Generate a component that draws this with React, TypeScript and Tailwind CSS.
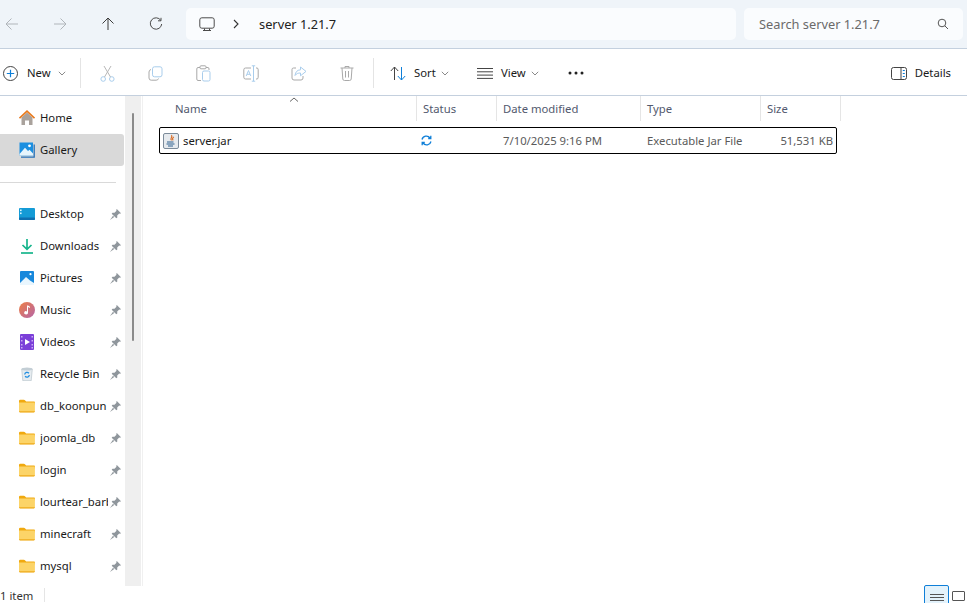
import React from "react";

const Chevron = ({ c = "#8a8a8a" }: { c?: string }) => (
  <svg width="8" height="5" viewBox="0 0 8 5" fill="none" stroke={c} strokeWidth="1"><path d="M.8.8 4 4 7.2.8" /></svg>
);

const Pin = () => (
  <svg width="11" height="11" viewBox="0 0 11 11" fill="#8f969c"><path d="M6.800 0 11 4.200 10 4.800 9.200 4.500 7.200 6.500 7.300 8.500 6.300 9.300 1.700 4.700 2.500 3.700 4.500 3.800 6.500 1.800 6.200 1Z" /><path d="M3 6.800 0 11 4.200 8Z" /></svg>
);

const Folder = () => (
  <svg width="16" height="14" viewBox="0 0 16 14"><path d="M0 2q0-1.200 1.200-1.200h3.600q.8 0 1.400.7l.9.9h8q.9 0 .9 1v2H0Z" fill="#f0a90f" /><path d="M0 3.600h15.900v8.700q0 1-1 1H1q-1 0-1-1Z" fill="#fcd468" /><path d="M0 12.200h15.900v.4q0 .8-1 .8H1q-1 0-1-.8Z" fill="#eeaa1c" /></svg>
);

const Ic = {
  home: <svg width="16" height="16" viewBox="0 0 16 16"><path d="M2.500 7.500 8 2.500l5.500 5V15H10v-4.500H6V15H2.500Z" fill="#a9a29c" /><path d="M.5 8.200 8 1.200l7.500 7" fill="none" stroke="#e8791c" strokeWidth="1.600" /></svg>,
  gallery: <svg width="16" height="16" viewBox="0 0 16 16"><path d="M.5.500h13.500v13H.5Z" fill="#1b8fe0" /><path d="M.5 12 6 5.800l3 3.200 1.500-1.300 3.500 3.800v2H.5Z" fill="#e6f5fd" /><circle cx="10.500" cy="3.800" r="1.400" fill="#fff" /><path d="M2 15.200h13.200V2.500" fill="none" stroke="#2570b8" strokeWidth="1.300" /></svg>,
  desktop: <svg width="16" height="12" viewBox="0 0 16 12"><rect width="16" height="12" rx="1" fill="#149bd6" /><rect y="9.500" width="16" height="2.500" rx="1" fill="#0e6fb0" /><rect x="1" y="1.500" width="1.600" height="1.600" fill="#d9f5ff" /><rect x="1" y="4.500" width="1.600" height="1.600" fill="#d9f5ff" /></svg>,
  downloads: <svg width="16" height="16" viewBox="0 0 16 16" fill="none" stroke="#17b58c" strokeWidth="1.700"><path d="M8 1v10M3.500 7 8 11.400 12.500 7" /><path d="M2 15h12" /></svg>,
  pictures: <svg width="14" height="14" viewBox="0 0 14 14"><rect width="14" height="14" rx="1" fill="#1888dc" /><path d="M0 12 6 6l4 3.500 4 2.500v2H0Z" fill="#e9f6fe" /><circle cx="10.500" cy="3.200" r="1.100" fill="#fff" /></svg>,
  music: <svg width="16" height="16" viewBox="0 0 16 16"><defs><linearGradient id="mg" x1="0" y1="0" x2="1" y2="1"><stop offset="0" stopColor="#ee7f45" /><stop offset="1" stopColor="#b565a8" /></linearGradient></defs><circle cx="8" cy="8" r="8" fill="url(#mg)" /><path d="M8 3.500h1v7.200a1.900 1.600 0 1 1-1-1.300ZM9 3.500l2 1.200v1.200L9 5Z" fill="#fff" /></svg>,
  videos: <svg width="14" height="16" viewBox="0 0 14 16"><rect width="14" height="16" rx="1" fill="#7b3fd8" /><path d="M5 5v6l5-3Z" fill="#fff" /><path d="M1 2h1.500v1.500H1ZM1 6h1.500v1.500H1ZM1 10h1.500v1.500H1ZM1 13h1.500v1.500H1ZM11.500 2H13v1.500h-1.500ZM11.500 6H13v1.500h-1.500ZM11.500 10H13v1.500h-1.500ZM11.500 13H13v1.500h-1.500Z" fill="#c9aaf5" /></svg>,
  bin: <svg width="12" height="14" viewBox="0 0 12 14"><path d="M.7 2h10.600l-1.100 11.700H1.800Z" fill="#e6ecf0" stroke="#b9c4cb" strokeWidth=".7" /><ellipse cx="6" cy="2" rx="5.300" ry="1.500" fill="#c3ced5" /><path d="M3.700 7.500a2.400 2.400 0 0 1 4.200-1.300M8.300 8a2.400 2.400 0 0 1-4.200 1.300" fill="none" stroke="#1f8de0" strokeWidth="1.300" /></svg>,
};

const nav: { label: string; icon: React.ReactNode }[] = [
  { label: "Desktop", icon: Ic.desktop },
  { label: "Downloads", icon: Ic.downloads },
  { label: "Pictures", icon: Ic.pictures },
  { label: "Music", icon: Ic.music },
  { label: "Videos", icon: Ic.videos },
  { label: "Recycle Bin", icon: Ic.bin },
  { label: "db_koonpun", icon: <Folder /> },
  { label: "joomla_db", icon: <Folder /> },
  { label: "login", icon: <Folder /> },
  { label: "lourtear_barber", icon: <Folder /> },
  { label: "minecraft", icon: <Folder /> },
  { label: "mysql", icon: <Folder /> },
];

const NavRow = ({ label, icon, pin, sel }: { label: string; icon: React.ReactNode; pin?: boolean; sel?: boolean }) => (
  <div className={`flex h-8 w-[124px] shrink-0 items-center rounded-r-[3px] pl-[19px] ${sel ? "bg-[#d9d9d9]" : ""}`}>
    <div className="flex w-[16px] shrink-0 justify-center">{icon}</div>
    <div className="ml-[5px] w-[68px] shrink-0 overflow-hidden whitespace-nowrap">{label}</div>
    {pin && <div className="ml-[2px] shrink-0"><Pin /></div>}
  </div>
);

const dim = "#a9a9a9";
const ToolIcon = ({ children }: { children: React.ReactNode }) => (
  <div className="flex w-[48px] shrink-0 items-center justify-center">{children}</div>
);

const headers = [
  { label: "Status", w: "w-[80px]" },
  { label: "Date modified", w: "w-[144px]" },
  { label: "Type", w: "w-[120px]" },
  { label: "Size", w: "w-[80px]" },
];

export default function App() {
  return (
    <div className="flex h-[603px] w-[967px] flex-col overflow-hidden bg-white font-['Noto_Sans','Open_Sans',sans-serif] text-[11.300px] text-[#1a1a1a]">
      {/* Title / address bar */}
      <div className="flex h-[49px] shrink-0 items-center border-b border-[#c4d0de] bg-[#eff4f9]">
        <div className="flex w-[186px] shrink-0">
          {[
            <svg key="b" width="14" height="14" viewBox="0 0 14 14" fill="none" stroke="#b0b5ba" strokeWidth="1"><path d="M13 7H1M6.500 1.500 1 7l5.500 5.500" /></svg>,
            <svg key="f" width="14" height="14" viewBox="0 0 14 14" fill="none" stroke="#b0b5ba" strokeWidth="1"><path d="M1 7h12M7.500 1.500 13 7l-5.500 5.500" /></svg>,
            <svg key="u" width="14" height="14" viewBox="0 0 14 14" fill="none" stroke="#3c3c3c" strokeWidth="1"><path d="M7 13V1M1.500 6.500 7 1l5.500 5.500" /></svg>,
            <svg key="r" width="14" height="14" viewBox="0 0 14 14" fill="none" stroke="#4a4a4a" strokeWidth="1"><path d="M11.800 3.400A5.700 5.700 0 1 0 12.700 7" /><path d="M12 .8v3h-3" /></svg>,
          ].map((ic, i) => (
            <div key={i} className="flex w-[48px] justify-center first:ml-[-12px]">{ic}</div>
          ))}
        </div>
        <div className="flex h-8 w-[550px] shrink-0 items-center rounded-[5px] bg-[#fafcfe] pl-[13px]">
          <svg width="16" height="15" viewBox="0 0 16 15" fill="none" stroke="#4a4a4a" strokeWidth="1"><rect x=".8" y=".8" width="14.400" height="10.400" rx="2" /><path d="M4 13.500h8M5.500 11.500v2M10.500 11.500v2" /></svg>
          <svg className="ml-[18px]" width="6" height="10" viewBox="0 0 6 10" fill="none" stroke="#333" strokeWidth="1.100"><path d="M1 1l4 4-4 4" /></svg>
          <span className="ml-[20px] pt-px text-[12.800px] text-[#222]">server 1.21.7</span>
        </div>
        <div className="ml-2 flex h-8 w-[219px] shrink-0 items-center justify-between rounded-[5px] bg-[#fafcfe] pl-[15px] pr-[14px]">
          <span className="pt-px text-[12.800px] text-[#6a6a6a]">Search server 1.21.7</span>
          <svg width="12" height="12" viewBox="0 0 12 12" fill="none" stroke="#555" strokeWidth="1"><circle cx="5" cy="5" r="3.800" /><path d="M7.800 7.800 11 11" /></svg>
        </div>
      </div>

      {/* Toolbar */}
      <div className="flex h-[47px] shrink-0 items-center border-b border-[#c4d0de] pl-[3px] pt-[2px]">
        <div className="flex w-[77px] shrink-0 items-center">
          <svg width="15" height="15" viewBox="0 0 15 15" fill="none"><circle cx="7.500" cy="7.500" r="7" stroke="#444" strokeWidth="1" /><path d="M7.500 3.800v7.400M3.800 7.500h7.400" stroke="#0f7fd8" strokeWidth="1.200" /></svg>
          <span className="ml-[9px]">New</span>
          <span className="ml-[7px] flex"><Chevron /></span>
        </div>
        <div className="h-[30px] w-px shrink-0 bg-[#e4e4e4]" />
        <div className="ml-[2px] flex h-full w-[288px] shrink-0">
          <ToolIcon>
            <svg width="15" height="17" viewBox="0 0 15 17" fill="none" stroke="#a9cdec" strokeWidth="1"><circle cx="3.200" cy="14" r="2.300" /><circle cx="11.800" cy="14" r="2.300" /><path d="M4.500 12 11 1M10.500 12 4 1" stroke="#b8b8b8" /></svg>
          </ToolIcon>
          <ToolIcon>
            <svg width="15" height="15" viewBox="0 0 15 15" fill="none" strokeWidth="1"><rect x="4.500" y=".8" width="9.500" height="10" rx="2" stroke="#a9cdec" /><path d="M3 3.500Q1 4 1 6v6q0 2.200 2.200 2.200h5q1.800 0 2.300-1.700" stroke={dim} /></svg>
          </ToolIcon>
          <ToolIcon>
            <svg width="15" height="17" viewBox="0 0 15 17" fill="none" strokeWidth="1"><path d="M4 2.500H2Q.8 2.500.8 4v10q0 1.500 1.200 1.500h3M10 2.500h2q1 0 1 1.500v1" stroke={dim} /><rect x="4" y=".8" width="6" height="3" rx="1" stroke={dim} /><rect x="6.500" y="6" width="7.500" height="10" rx="1.500" stroke="#a9cdec" /></svg>
          </ToolIcon>
          <ToolIcon>
            <svg width="16" height="17" viewBox="0 0 16 17" fill="none" strokeWidth="1"><path d="M8 3H2.500Q.8 3 .8 4.800v7.400Q.8 14 2.500 14H8M13 3h1q1.200 0 1.200 1.800v7.400Q15.200 14 14 14h-1" stroke={dim} /><path d="M10.500.8v15.400M8.800.8h3.400M8.800 16.200h3.400" stroke="#a9cdec" /><path d="M3.200 11 5.500 5.500 7.800 11M4 9.300h3" stroke="#a9cdec" /></svg>
          </ToolIcon>
          <ToolIcon>
            <svg width="16" height="15" viewBox="0 0 16 15" fill="none" strokeWidth="1"><path d="M5 2H2.500Q1 2 1 3.500v8.500q0 2 2 2h7q2 0 2-2V10" stroke={dim} /><path d="M9.500 1v2.800C6 4 4.500 6 4 9.500 5.500 7.500 7 7 9.500 7v2.800L15 5.400Z" stroke="#a9cdec" /></svg>
          </ToolIcon>
          <ToolIcon>
            <svg width="14" height="16" viewBox="0 0 14 16" fill="none" stroke={dim} strokeWidth="1"><path d="M.5 3h13M5 3V1.500h4V3M2 3l.8 11q.1 1.500 1.700 1.500h5q1.600 0 1.700-1.500L12 3M5.500 6v6.500M8.500 6v6.500" /></svg>
          </ToolIcon>
        </div>
        <div className="ml-[2px] h-[30px] w-px shrink-0 bg-[#e4e4e4]" />
        <svg className="ml-[16px] shrink-0" width="16" height="15" viewBox="0 0 16 15" fill="none" strokeWidth="1"><path d="M4.500 14V1M.8 5 4.500 1 8.200 5" stroke="#444" /><path d="M11.500 1v13M7.800 10l3.700 4 3.700-4" stroke="#0f7fd8" /></svg>
        <span className="ml-[8px] w-[23px]">Sort</span>
        <span className="ml-[4px] flex"><Chevron /></span>
        <svg className="ml-[28px] shrink-0" width="16" height="11" viewBox="0 0 16 11" stroke="#444" strokeWidth="1"><path d="M0 .5h16M0 3.800h16M0 7.100h16M0 10.400h16" /></svg>
        <span className="ml-[8px] w-[26px]">View</span>
        <span className="ml-[4px] flex"><Chevron /></span>
        <svg className="ml-[29px] shrink-0" width="16" height="4" viewBox="0 0 16 4" fill="#222"><circle cx="2" cy="2" r="1.500" /><circle cx="8" cy="2" r="1.500" /><circle cx="14" cy="2" r="1.500" /></svg>
        <div className="ml-auto flex items-center pr-[16px]">
          <svg width="16" height="13" viewBox="0 0 16 13" fill="none" strokeWidth="1"><rect x=".5" y=".5" width="15" height="12" rx="2" stroke="#444" /><path d="M10 .5v12" stroke="#444" /><path d="M11.800 3.500h2M11.800 6.500h2M11.800 9.500h2" stroke="#0f7fd8" /></svg>
          <span className="ml-[8px]">Details</span>
        </div>
      </div>

      {/* Body */}
      <div className="flex min-h-0 flex-1">
        <div className="flex h-[490px] w-[125px] shrink-0 flex-col overflow-hidden pt-[6px]">
          <NavRow label="Home" icon={Ic.home} />
          <NavRow label="Gallery" icon={Ic.gallery} sel />
          <div className="mt-[16px] mb-[15px] h-px w-[116px] shrink-0 bg-[#d9d9d9]" />
          {nav.map((n) => <NavRow key={n.label} {...n} pin />)}
        </div>
        <div className="h-[490px] w-[16px] shrink-0 bg-[#efefef] pl-[7px] pt-[17px]">
          <div className="h-[228px] w-[2px] rounded-full bg-[#8a8a8a]" />
        </div>
        <div className="h-[490px] w-px shrink-0 bg-white" />
        <div className="h-[490px] w-px shrink-0 bg-[#f0f0f0]" />
        <div className="relative min-w-0 flex-1 text-[#5a5a5a]">
          <div className="flex h-[25px] text-[#52596e]">
            <div className="flex w-[273px] items-center pl-[32px] pt-[2px]">Name</div>
            {headers.map((h) => (
              <div key={h.label} className={`flex items-center border-l border-[#e5e5e5] pl-[6px] pt-[2px] ${h.w}`}>{h.label}</div>
            ))}
            <div className="border-l border-[#e5e5e5]" />
          </div>
          <svg className="absolute left-[146px] top-[1px]" width="10" height="5" viewBox="0 0 10 5" fill="none" stroke="#666" strokeWidth="1"><path d="M1 4.500 5 1l4 3.500" /></svg>
          <div className="ml-[16px] mt-[6px] flex h-[27px] w-[678px] items-center rounded-[2px] border-[1.500px] border-black">
            <svg className="ml-[3px] shrink-0" width="16" height="16" viewBox="0 0 16 16" fill="none">
              <rect x=".5" y=".5" width="15" height="15" rx="1.500" fill="#e6eaee" stroke="#7c8b9a" />
              <path d="M8.500 2c1.800 2-2.200 3 0 5.400M10.800 3.800c-1.200 1-1.800 2.200-.6 3.600" stroke="#d9661b" strokeWidth="1.100" />
              <path d="M4 9h6.500M3.500 11h8M5 13h5" stroke="#2f618f" strokeWidth="1" />
            </svg>
            <span className="ml-[4px] w-[238px] shrink-0 pt-[2px] text-[#1a1a1a]">server.jar</span>
            <svg className="shrink-0" width="11" height="11" viewBox="0 0 11 11" fill="none" stroke="#0f7fd8" strokeWidth="1.300"><path d="M1 4.500A4.500 4.500 0 0 1 9 3M9.800 .8V3.500H7.200M10 6.500A4.500 4.500 0 0 1 2 8M1.200 10.200V7.500h2.600" /></svg>
            <span className="ml-[71px] w-[144px] shrink-0 pt-[2px]">7/10/2025 9:16 PM</span>
            <span className="w-[120px] shrink-0 pt-[2px]">Executable Jar File</span>
            <span className="w-[66px] shrink-0 pt-[2px] text-right">51,531 KB</span>
          </div>
        </div>
      </div>

      {/* Status bar */}
      <div className="relative flex h-[18px] shrink-0 items-center justify-between">
        <div className="flex h-full items-start pt-[3px]">
          <span className="text-[#333]">1 item</span>
          <div className="ml-[11px] h-[14px] w-px bg-[#e5e5e5]" />
        </div>
        <div className="flex h-full items-start self-start pr-[2px]">
          <div className="flex h-[22px] w-[25px] flex-col items-center gap-[2px] rounded-[2px] border border-[#0f7fd8] bg-[#e3f2fb] pt-[8px]">
            <div className="h-px w-[14px] bg-[#555]" /><div className="h-px w-[14px] bg-[#555]" /><div className="h-px w-[14px] bg-[#555]" />
          </div>
          <div className="ml-[2px] flex flex-col items-center pt-[6px]">
            <div className="h-[10px] w-[13px] rounded-[1px] border border-[#555]" />
            <div className="mt-[2px] h-px w-[14px] bg-[#555]" />
          </div>
        </div>
      </div>
    </div>
  );
}
